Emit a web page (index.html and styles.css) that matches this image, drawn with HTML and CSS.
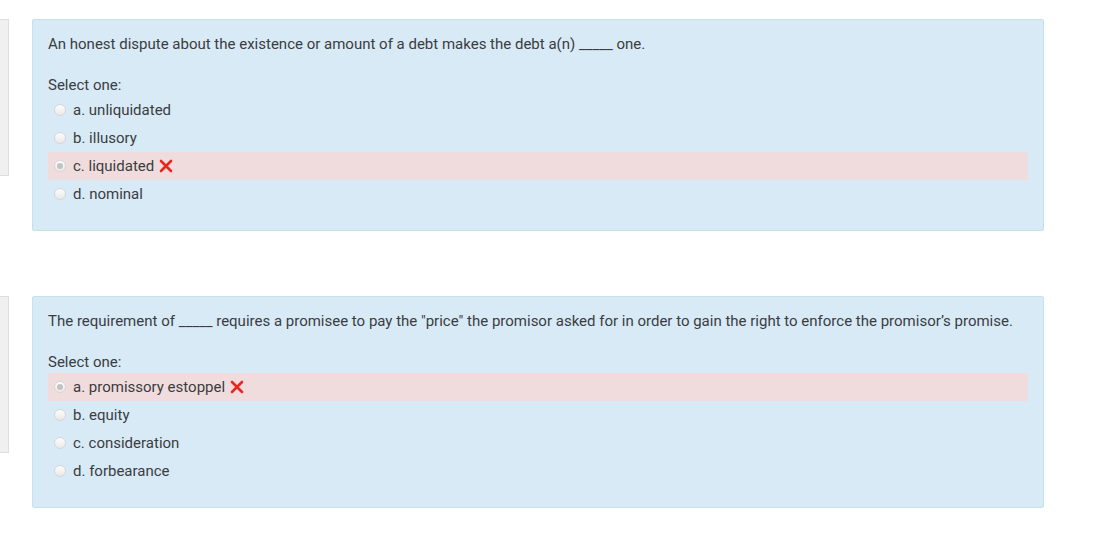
FILE: index.html
```html
<!DOCTYPE html>
<html lang="en">
<head>
  <meta charset="UTF-8" />
  <title>Quiz review</title>
  <link rel="stylesheet" href="styles.css">
</head>
<body>
  <div class="que">
    <div class="info"></div>
    <div class="formulation">
      <div class="qtext">An honest dispute about the existence or amount of a debt makes the debt a(n) _____ one.</div>
      <div class="prompt">Select one:</div>
      <div class="answer">
        <div class="option"><span class="radio"></span><span>a. unliquidated</span></div>
        <div class="option"><span class="radio"></span><span>b. illusory</span></div>
        <div class="option incorrect"><span class="radio checked"></span><span>c. liquidated</span>
          <svg class="xicon" viewBox="0 0 14 14" width="14" height="14"><path d="M2 2 L12 12 M12 2 L2 12" stroke="#e8271f" stroke-width="2.6" stroke-linecap="round"/></svg>
        </div>
        <div class="option"><span class="radio"></span><span>d. nominal</span></div>
      </div>
    </div>
  </div>

  <div class="que">
    <div class="info"></div>
    <div class="formulation">
      <div class="qtext">The requirement of _____ requires a promisee to pay the "price" the promisor asked for in order to gain the right to enforce the promisor’s promise.</div>
      <div class="prompt">Select one:</div>
      <div class="answer">
        <div class="option incorrect"><span class="radio checked"></span><span>a. promissory estoppel</span>
          <svg class="xicon" viewBox="0 0 14 14" width="14" height="14"><path d="M2 2 L12 12 M12 2 L2 12" stroke="#e8271f" stroke-width="2.6" stroke-linecap="round"/></svg>
        </div>
        <div class="option"><span class="radio"></span><span>b. equity</span></div>
        <div class="option"><span class="radio"></span><span>c. consideration</span></div>
        <div class="option"><span class="radio"></span><span>d. forbearance</span></div>
      </div>
    </div>
  </div>
</body>
</html>
```

FILE: styles.css
```css
body {
  font-family: Roboto, "Liberation Sans", sans-serif;
  font-size: 15px;
  color: #3a3d3f;
  background: #fff;
  margin: 0;
  padding-top: 19px;
}
.que {
  display: flex;
  align-items: flex-start;
  margin-bottom: 65px;
}
.que:last-child {
  margin-bottom: 0;
}
.info {
  width: 9px;
  height: 157px;
  background: #f0f0f0;
  border: 1px solid #dedede;
  border-left: none;
  box-sizing: border-box;
  flex-shrink: 0;
}
.formulation {
  margin-left: 23px;
  width: 1012px;
  box-sizing: border-box;
  background: #d9eaf7;
  border: 1px solid #c4e2ea;
  border-radius: 2px;
  padding: 13px 15px 22px 15px;
}
.qtext {
  line-height: 22px;
}
.prompt {
  margin-top: 19px;
  line-height: 22px;
}
.answer {
  margin-top: 0;
}
.option {
  display: flex;
  align-items: center;
  height: 28px;
  padding-left: 6px;
}
.option.incorrect {
  background: #f0dcdd;
}
.radio {
  width: 12px;
  height: 12px;
  border-radius: 50%;
  border: 1px solid #d6d6d6;
  background: linear-gradient(#fdfdfd, #e9e9e9);
  box-sizing: border-box;
  margin-right: 7px;
  position: relative;
}
.radio.checked::after {
  content: "";
  position: absolute;
  left: 2px;
  top: 2px;
  width: 6px;
  height: 6px;
  border-radius: 50%;
  background: #c2c2c2;
}
.xicon {
  margin-left: 5px;
}
```
